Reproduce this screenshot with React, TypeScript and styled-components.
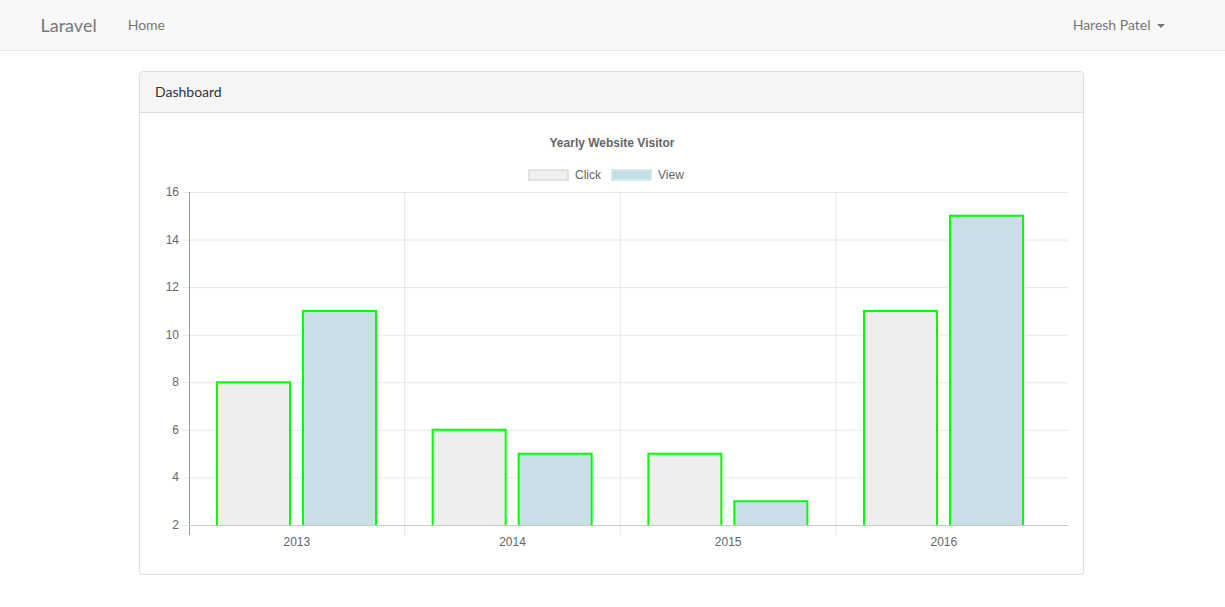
import styled, { createGlobalStyle } from "styled-components";

const GlobalStyle = createGlobalStyle`
  html, body {
    margin: 0;
    padding: 0;
    background: #fff;
  }
  body {
    font-family: Lato, "Open Sans", sans-serif;
    font-size: 14px;
    line-height: 1.6;
    color: #636b6f;
  }
`;

const Navbar = styled.nav`
  height: 50px;
  background: #f8f8f8;
  border-bottom: 1px solid #e7e7e7;
`;

const NavInner = styled.div`
  max-width: 1170px;
  height: 100%;
  margin: 0 auto;
  padding: 0 15px;
  display: flex;
  align-items: center;
  box-sizing: border-box;
`;

const Brand = styled.a`
  font-size: 18px;
  line-height: 20px;
  color: #777;
  padding: 15px 16px 15px 15px;
  margin-left: -17px;
  text-decoration: none;
`;

const NavLink = styled.a<{ $right?: boolean }>`
  font-size: 14px;
  line-height: 20px;
  color: #777;
  padding: 15px;
  text-decoration: none;
  display: flex;
  align-items: center;
  margin-left: ${(p) => (p.$right ? "auto" : "0")};
  margin-right: ${(p) => (p.$right ? "3px" : "0")};
`;

const Caret = styled.span`
  display: inline-block;
  width: 0;
  height: 0;
  margin-left: 6px;
  margin-top: 1px;
  border-top: 4px solid #777;
  border-left: 4px solid transparent;
  border-right: 4px solid transparent;
`;

const Main = styled.main`
  display: flex;
  justify-content: center;
  padding: 20px 2px 0 0;
`;

const Panel = styled.div`
  box-sizing: border-box;
  width: 945px;
  border: 1px solid #ddd;
  border-radius: 4px;
  background: #fff;
  box-shadow: 0 1px 1px rgba(0, 0, 0, 0.05);
`;

const PanelHeading = styled.div`
  padding: 10px 15px;
  line-height: 20px;
  background: #f5f5f5;
  color: #333;
  border-bottom: 1px solid #ddd;
  border-radius: 3px 3px 0 0;
`;

const PanelBody = styled.div`
  padding: 15px 15px 16px;
`;

const Chart = styled.svg`
  display: block;
  width: 914px;
  height: 430px;
  overflow: visible;
  font-family: "Liberation Sans", Arial, sans-serif;
`;

const data = [
  { year: "2013", click: 8, view: 11 },
  { year: "2014", click: 6, view: 5 },
  { year: "2015", click: 5, view: 3 },
  { year: "2016", click: 11, view: 15 },
];

const base = 397;
const yOf = (v: number) => base - (v - 2) * 23.786;
const left = 34;
const catW = 215.67;
const ticks = [16, 14, 12, 10, 8, 6, 4, 2];

const Bar = ({ x, value, fill }: { x: number; value: number; fill: string }) => {
  const top = yOf(value);
  return (
    <g>
      <rect x={x} y={top} width={73} height={base - top} fill={fill} />
      <path
        d={`M${x} ${base} V${top} H${x + 73} V${base}`}
        fill="none"
        stroke="#00ff00"
        strokeWidth={2}
      />
    </g>
  );
};

const YearChart = () => (
  <Chart viewBox="0 0 914 430">
    <text x={457} y={19} textAnchor="middle" fontSize={12} fontWeight="bold" fill="#666">
      Yearly Website Visitor
    </text>

    <rect x={374} y={42} width={39} height={10} fill="#efefef" stroke="#e2e2e2" strokeWidth={2} />
    <text x={420} y={51} fontSize={12} fill="#666">Click</text>
    <rect x={457} y={42} width={39} height={10} fill="#c4dfe3" stroke="#d6e8ea" strokeWidth={2} />
    <text x={503} y={51} fontSize={12} fill="#666">View</text>

    {ticks.map((t) => (
      <g key={t}>
        <line
          x1={28}
          x2={913}
          y1={yOf(t) + 0.5}
          y2={yOf(t) + 0.5}
          stroke="#e6e6e6"
          strokeWidth={1}
        />
        <text x={24} y={yOf(t) + 4} textAnchor="end" fontSize={12} fill="#666">
          {t}
        </text>
      </g>
    ))}

    {[1, 2, 3].map((i) => (
      <line
        key={i}
        x1={left + catW * i}
        x2={left + catW * i}
        y1={64}
        y2={407}
        stroke="#e6e6e6"
        strokeWidth={1}
      />
    ))}

    {data.map((d, i) => {
      const x0 = left + catW * i + 28;
      return (
        <g key={d.year}>
          <Bar x={x0} value={d.click} fill="#eeeeee" />
          <Bar x={x0 + 86} value={d.view} fill="#cbdde6" />
          <text x={left + catW * (i + 0.5)} y={418} textAnchor="middle" fontSize={12} fill="#666">
            {d.year}
          </text>
        </g>
      );
    })}
    <line x1={34.5} x2={34.5} y1={64} y2={407} stroke="#999" strokeWidth={1} />
    <line x1={34} x2={913} y1={base + 0.5} y2={base + 0.5} stroke="#c8c8c8" strokeWidth={1} />
  </Chart>
);

const App = () => (
  <>
    <GlobalStyle />
    <Navbar>
      <NavInner>
        <Brand href="#">Laravel</Brand>
        <NavLink href="#">Home</NavLink>
        <NavLink href="#" $right>
          Haresh Patel
          <Caret />
        </NavLink>
      </NavInner>
    </Navbar>
    <Main>
      <Panel>
        <PanelHeading>Dashboard</PanelHeading>
        <PanelBody>
          <YearChart />
        </PanelBody>
      </Panel>
    </Main>
  </>
);

export default App;
